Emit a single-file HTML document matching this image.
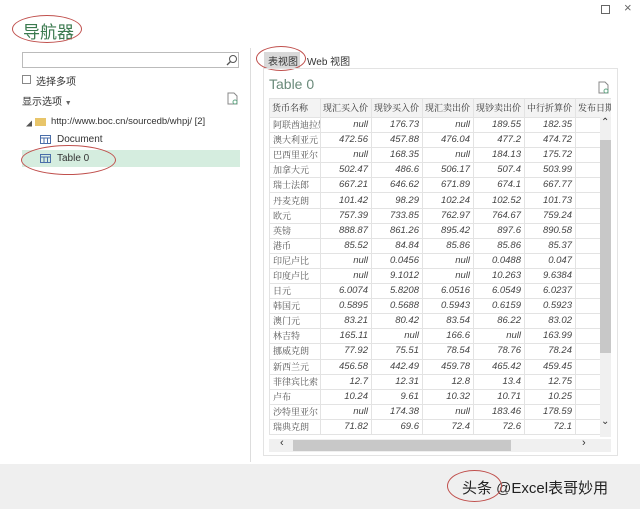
<!DOCTYPE html>
<html><head><meta charset="utf-8"><style>
*{margin:0;padding:0;box-sizing:border-box}
body{width:640px;height:509px;background:#fff;position:relative;overflow:hidden;font-family:"Liberation Sans","Noto Sans CJK SC",sans-serif;color:#333}
.a{position:absolute}
.ell{position:absolute;border:1.5px solid #c0504d;border-radius:50%}
table{border-collapse:collapse;font-size:9.5px}
tr{height:15.1px}
td{border:1px solid #e3e3e3;padding:0 3px;line-height:12px;font-style:italic;text-align:right;color:#444;white-space:nowrap;overflow:hidden}
td.n{font-style:normal;text-align:left;font-family:"Noto Serif CJK SC",serif;color:#555;font-size:9px}
tr.h{height:19px}
th{font-family:"Noto Serif CJK SC",serif;font-weight:normal;font-size:9px;line-height:12px;text-align:left;padding:0 2px;color:#333;border:1px solid #e3e3e3;white-space:nowrap;overflow:hidden}
</style></head><body>
<div class="a" style="left:23px;top:18px;font-size:17px;color:#3b7a4f">导航器</div>
<div class="ell" style="left:12px;top:15px;width:70px;height:28px"></div>
<div class="a" style="left:601px;top:5px;width:9px;height:9px;border:1px solid #666"></div>
<div class="a" style="left:624px;top:0px;font-size:13px;color:#666">×</div>
<div class="a" style="left:22px;top:52px;width:217px;height:16px;border:1px solid #bbb"></div>
<svg class="a" style="left:226px;top:54px" width="12" height="12"><circle cx="7" cy="5" r="3.5" fill="none" stroke="#555"/><line x1="4.5" y1="7.5" x2="1" y2="11" stroke="#555" stroke-width="1.3"/></svg>
<div class="a" style="left:22px;top:75px;width:9px;height:9px;border:1px solid #888"></div>
<div class="a" style="left:36px;top:73px;font-size:10px">选择多项</div>
<div class="a" style="left:22px;top:93px;font-size:10px">显示选项 <span style="font-size:7px;color:#666">▼</span></div>
<svg class="a" style="left:227px;top:92px" width="11" height="13"><path d="M1 1h6l3 3v8H1z" fill="none" stroke="#888"/><circle cx="8" cy="10" r="2" fill="#fff" stroke="#6a8"/></svg>
<div class="a" style="left:26px;top:119px;font-size:6px;color:#555">◢</div>
<div class="a" style="left:35px;top:118px;width:11px;height:8px;background:#e8c56a"></div>
<div class="a" style="left:51px;top:116px;font-size:9.5px">http://www.boc.cn/sourcedb/whpj/ [2]</div>
<svg class="a" style="left:40px;top:135px" width="11" height="9"><rect x="0.5" y="0.5" width="10" height="8" fill="none" stroke="#4a6ea9"/><line x1="0" y1="3" x2="11" y2="3" stroke="#4a6ea9"/><line x1="4" y1="3" x2="4" y2="9" stroke="#4a6ea9"/><line x1="7.5" y1="3" x2="7.5" y2="9" stroke="#4a6ea9"/></svg>
<div class="a" style="left:57px;top:134px;font-size:10px">Document</div>
<div class="a" style="left:22px;top:150px;width:218px;height:17px;background:#d5eddf"></div>
<svg class="a" style="left:40px;top:154px" width="11" height="9"><rect x="0.5" y="0.5" width="10" height="8" fill="none" stroke="#4a6ea9"/><line x1="0" y1="3" x2="11" y2="3" stroke="#4a6ea9"/><line x1="4" y1="3" x2="4" y2="9" stroke="#4a6ea9"/><line x1="7.5" y1="3" x2="7.5" y2="9" stroke="#4a6ea9"/></svg>
<div class="a" style="left:57px;top:153px;font-size:10px">Table 0</div>
<div class="ell" style="left:21px;top:145px;width:95px;height:30px"></div>
<div class="a" style="left:250px;top:48px;width:1px;height:414px;background:#ddd"></div>
<div class="a" style="left:264px;top:52px;width:36px;height:16px;background:#d9d9d9"></div>
<div class="a" style="left:268px;top:53px;font-size:10px">表视图</div>
<div class="a" style="left:307px;top:53px;font-size:10px">Web 视图</div>
<div class="ell" style="left:256px;top:46px;width:50px;height:25px"></div>
<div class="a" style="left:263px;top:68px;width:355px;height:388px;border:1px solid #e3e3e3"></div>
<div class="a" style="left:269px;top:76px;font-size:14px;color:#6a8a7a">Table 0</div>
<svg class="a" style="left:598px;top:81px" width="11" height="13"><path d="M1 1h6l3 3v8H1z" fill="none" stroke="#888"/><circle cx="8" cy="10" r="2" fill="#fff" stroke="#6a8"/></svg>
<div class="a" style="left:269px;top:98px;width:342px;height:339px;overflow:hidden">
<table style="width:360px;table-layout:fixed">
<colgroup><col style="width:51px"><col style="width:51px"><col style="width:51px"><col style="width:51px"><col style="width:51px"><col style="width:51px"><col style="width:54px"></colgroup>
<tr class="h" style="background:#f3f3f3"><th>货币名称</th><th>现汇买入价</th><th>现钞买入价</th><th>现汇卖出价</th><th>现钞卖出价</th><th>中行折算价</th><th>发布日期</th></tr>
<tr><td class="n">阿联酋迪拉姆</td><td>null</td><td>176.73</td><td>null</td><td>189.55</td><td>182.35</td><td>2</td></tr>
<tr><td class="n">澳大利亚元</td><td>472.56</td><td>457.88</td><td>476.04</td><td>477.2</td><td>474.72</td><td>2</td></tr>
<tr><td class="n">巴西里亚尔</td><td>null</td><td>168.35</td><td>null</td><td>184.13</td><td>175.72</td><td>2</td></tr>
<tr><td class="n">加拿大元</td><td>502.47</td><td>486.6</td><td>506.17</td><td>507.4</td><td>503.99</td><td>2</td></tr>
<tr><td class="n">瑞士法郎</td><td>667.21</td><td>646.62</td><td>671.89</td><td>674.1</td><td>667.77</td><td>2</td></tr>
<tr><td class="n">丹麦克朗</td><td>101.42</td><td>98.29</td><td>102.24</td><td>102.52</td><td>101.73</td><td>2</td></tr>
<tr><td class="n">欧元</td><td>757.39</td><td>733.85</td><td>762.97</td><td>764.67</td><td>759.24</td><td>2</td></tr>
<tr><td class="n">英镑</td><td>888.87</td><td>861.26</td><td>895.42</td><td>897.6</td><td>890.58</td><td>2</td></tr>
<tr><td class="n">港币</td><td>85.52</td><td>84.84</td><td>85.86</td><td>85.86</td><td>85.37</td><td>2</td></tr>
<tr><td class="n">印尼卢比</td><td>null</td><td>0.0456</td><td>null</td><td>0.0488</td><td>0.047</td><td>2</td></tr>
<tr><td class="n">印度卢比</td><td>null</td><td>9.1012</td><td>null</td><td>10.263</td><td>9.6384</td><td>2</td></tr>
<tr><td class="n">日元</td><td>6.0074</td><td>5.8208</td><td>6.0516</td><td>6.0549</td><td>6.0237</td><td>2</td></tr>
<tr><td class="n">韩国元</td><td>0.5895</td><td>0.5688</td><td>0.5943</td><td>0.6159</td><td>0.5923</td><td>2</td></tr>
<tr><td class="n">澳门元</td><td>83.21</td><td>80.42</td><td>83.54</td><td>86.22</td><td>83.02</td><td>2</td></tr>
<tr><td class="n">林吉特</td><td>165.11</td><td>null</td><td>166.6</td><td>null</td><td>163.99</td><td>2</td></tr>
<tr><td class="n">挪威克朗</td><td>77.92</td><td>75.51</td><td>78.54</td><td>78.76</td><td>78.24</td><td>2</td></tr>
<tr><td class="n">新西兰元</td><td>456.58</td><td>442.49</td><td>459.78</td><td>465.42</td><td>459.45</td><td>2</td></tr>
<tr><td class="n">菲律宾比索</td><td>12.7</td><td>12.31</td><td>12.8</td><td>13.4</td><td>12.75</td><td>2</td></tr>
<tr><td class="n">卢布</td><td>10.24</td><td>9.61</td><td>10.32</td><td>10.71</td><td>10.25</td><td>2</td></tr>
<tr><td class="n">沙特里亚尔</td><td>null</td><td>174.38</td><td>null</td><td>183.46</td><td>178.59</td><td>2</td></tr>
<tr><td class="n">瑞典克朗</td><td>71.82</td><td>69.6</td><td>72.4</td><td>72.6</td><td>72.1</td><td>2</td></tr>
</table></div>
<div class="a" style="left:600px;top:117px;width:11px;height:320px;background:#f0f0f0"></div>
<div class="a" style="left:600px;top:140px;width:11px;height:213px;background:#c8c8c8"></div>
<div class="a" style="left:601px;top:117px;font-size:10px;color:#333">⌃</div>
<div class="a" style="left:601px;top:416px;font-size:10px;color:#333">⌄</div>
<div class="a" style="left:269px;top:439px;width:342px;height:13px;background:#f0f0f0"></div>
<div class="a" style="left:293px;top:440px;width:218px;height:11px;background:#c8c8c8"></div>
<div class="a" style="left:280px;top:437px;font-size:11px;color:#333">‹</div>
<div class="a" style="left:582px;top:437px;font-size:11px;color:#333">›</div>
<div class="a" style="left:0;top:464px;width:640px;height:45px;background:#efefef"></div>
<div class="a" style="left:462px;top:477px;font-size:15px;color:#222">头条 @Excel表哥妙用</div>
<div class="ell" style="left:447px;top:470px;width:55px;height:32px"></div>
</body></html>
